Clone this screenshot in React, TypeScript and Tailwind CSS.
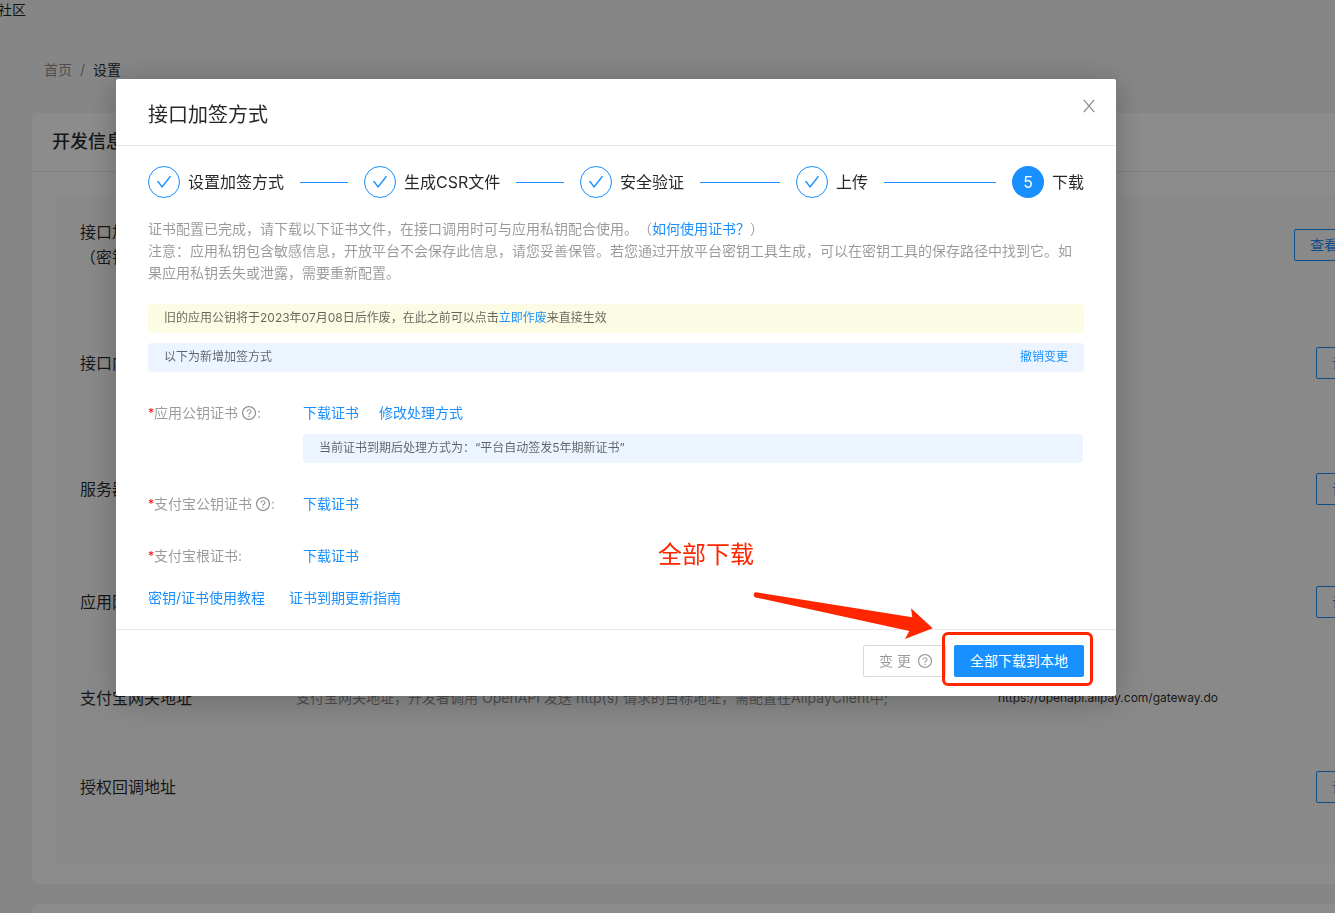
import type { ReactNode } from 'react';
import { AiOutlineCheck, AiOutlineQuestionCircle } from 'react-icons/ai';

interface SettingRow {
  label: ReactNode;
  height: string;
  desc?: string;
  value?: string;
  action?: string;
  actionWidth?: string;
}

const rows: SettingRow[] = [
  {
    label: (
      <>
        接口加签方式
        <br />
        （密钥/证书）
      </>
    ),
    height: 'min-h-[98px]',
    action: '查看修改',
    actionWidth: 'w-[86px]',
  },
  { label: '接口内容加密方式', height: 'min-h-[138px]', action: '设 置', actionWidth: 'w-16' },
  { label: '服务器IP白名单', height: 'min-h-[114px]', action: '设 置', actionWidth: 'w-16' },
  { label: '应用网关', height: 'min-h-[112px]', action: '设 置', actionWidth: 'w-16' },
  {
    label: '支付宝网关地址',
    height: 'min-h-[80px]',
    desc: '支付宝网关地址，开发者调用 OpenAPI 发送 http(s) 请求的目标地址，需配置在AlipayClient中;',
    value: 'https://openapi.alipay.com/gateway.do',
  },
  { label: '授权回调地址', height: 'min-h-[98px]', action: '设 置', actionWidth: 'w-16' },
];

const steps = ['设置加签方式', '生成CSR文件', '安全验证', '上传', '下载'];

const Link = ({ children }: { children: ReactNode }) => (
  <a href="#" className="text-[#1890ff]">
    {children}
  </a>
);

const Steps = ({ current }: { current: number }) => (
  <ol className="flex items-center">
    {steps.map((step, index) => (
      <li key={step} className={`flex items-center text-base text-black/85 ${index < steps.length - 1 ? 'flex-1' : ''}`}>
        {index < current ? (
          <span className="mr-2 flex h-8 w-8 items-center justify-center rounded-full border border-[#1890ff] text-[#1890ff]">
            <AiOutlineCheck className="h-[18px] w-[18px]" />
          </span>
        ) : (
          <span className="mr-2 flex h-8 w-8 items-center justify-center rounded-full bg-[#1890ff] text-white">
            {index + 1}
          </span>
        )}
        <span className="whitespace-nowrap">{step}</span>
        {index < steps.length - 1 && <span className="mx-4 h-px flex-1 bg-[#1890ff]" />}
      </li>
    ))}
  </ol>
);

interface CertRowProps {
  label: string;
  help?: boolean;
  children: ReactNode;
}

const CertRow = ({ label, help, children }: CertRowProps) => (
  <div className="mt-[30px] flex items-start">
    <div className="flex w-[155px] shrink-0 items-center text-black/40">
      <span className="text-xs text-[#ff0000]">*</span>
      {label}
      {help && <AiOutlineQuestionCircle className="ml-[3px] h-4 w-4 text-black/45" />}:
    </div>
    <div className="mr-px flex-1">{children}</div>
  </div>
);

const SettingsPage = () => (
  <div className="-mr-[93px]">
    <div className="-ml-0.5 h-5 leading-5 text-black/85">社区</div>
    <nav className="mt-[39px] ml-11 flex gap-2 leading-[22px]">
      <a href="#" className="text-black/45">首页</a>
      <span className="text-black/45">/</span>
      <span className="text-black/85">设置</span>
    </nav>
    <section className="mt-8 ml-8 rounded-lg bg-white pb-5">
      <h2 className="border-b border-[#e8e8e8] px-5 py-[15px] text-lg leading-7 font-medium text-black/85">开发信息</h2>
      <div className="mx-6 mt-6 bg-[#fafafa] px-6 pb-7">
        {rows.map((row, index) => (
          <div key={index} className={`flex items-center ${row.height}`}>
            <div className="w-[216px] shrink-0 text-base leading-[25px] text-black/85">{row.label}</div>
            <div className="w-[702px] shrink-0 text-black/45">{row.desc}</div>
            <div className="flex-1 text-xs text-black/85">{row.value}</div>
            {row.action && (
              <button
                className={`h-8 shrink-0 rounded-xs border border-[#1890ff] px-[15px] text-left whitespace-nowrap text-[#1890ff] ${row.actionWidth}`}
              >
                {row.action}
              </button>
            )}
          </div>
        ))}
      </div>
    </section>
    <section className="mt-5 ml-8 h-20 rounded-lg bg-white" />
  </div>
);

export default function App() {
  return (
    <div
      lang="zh-CN"
      className="h-screen overflow-hidden bg-[#f4f4f4] font-['Inter','Noto_Sans_CJK_SC',sans-serif] text-sm leading-[22px] [text-spacing-trim:space-all]"
    >
      <SettingsPage />

      <div className="fixed inset-0 overflow-hidden bg-black/45 pt-[79px] pl-[116px]">
        <div
          role="dialog"
          aria-labelledby="dialog-title"
          className="relative w-full max-w-[1000px] rounded-xs bg-white shadow-[0_4px_32px_rgba(0,0,0,0.25)]"
        >
          {/* Header */}
          <div className="flex items-start justify-between border-b border-[#e8e8e8] px-8 pt-5 pb-[14px]">
            <h1 id="dialog-title" className="text-xl leading-8 text-black/85">接口加签方式</h1>
            <button aria-label="关闭" className="-mr-[13px] flex h-4 w-4 items-center text-black/45">
              <svg viewBox="0 0 16 16" className="h-4 w-4" fill="none" stroke="currentColor" strokeWidth="1.3">
                <path d="M2.8 .8 13.2 13.2M13.2 .8 2.8 13.2" />
              </svg>
            </button>
          </div>

          {/* Body */}
          <div className="px-8 py-5">
            <Steps current={4} />

            <p className="mt-5 text-black/40">
              证书配置已完成，请下载以下证书文件，在接口调用时可与应用私钥配合使用。（<Link>如何使用证书？</Link>）
              <br />
              注意：应用私钥包含敏感信息，开放平台不会保存此信息，请您妥善保管。若您通过开放平台密钥工具生成，可以在密钥工具的保存路径中找到它。如果应用私钥丢失或泄露，需要重新配置。
            </p>

            <div className="mt-5 h-[29px] rounded bg-[#fcfbe3] px-4 text-xs leading-7 text-black/60">
              旧的应用公钥将于2023年07月08日后作废，在此之前可以点击<Link>立即作废</Link>来直接生效
            </div>
            <div className="mt-[10px] flex h-[29px] justify-between rounded bg-[#ecf5ff] px-4 text-xs leading-7 text-black/60">
              <span>以下为新增加签方式</span>
              <Link>撤销变更</Link>
            </div>

            <CertRow label="应用公钥证书" help>
              <div className="flex gap-5">
                <Link>下载证书</Link>
                <Link>修改处理方式</Link>
              </div>
              <div className="mt-[10px] h-[29px] rounded bg-[#ecf5ff] px-4 text-xs leading-7 text-black/60">
                当前证书到期后处理方式为：“平台自动签发5年期新证书”
              </div>
            </CertRow>
            <CertRow label="支付宝公钥证书" help>
              <Link>下载证书</Link>
            </CertRow>
            <CertRow label="支付宝根证书">
              <Link>下载证书</Link>
            </CertRow>

            <div className="mt-5 flex gap-6">
              <Link>密钥/证书使用教程</Link>
              <Link>证书到期更新指南</Link>
            </div>
          </div>

          {/* Footer */}
          <div className="flex justify-end gap-2 border-t border-[#e8e8e8] px-8 pt-[15px] pb-[19px]">
            <button className="flex h-8 items-center gap-1.5 rounded-xs border border-[#d9d9d9] pr-3 pl-[15px] text-black/40">
              变 更
              <AiOutlineQuestionCircle className="h-4 w-4" />
            </button>
            <div className="relative">
              <button className="h-8 rounded-xs bg-[#1890ff] px-4 text-white">全部下载到本地</button>
              <span className="pointer-events-none absolute -top-[13px] -right-[9px] -bottom-[9px] -left-3 rounded-md border-3 border-[#ff2600]" />
            </div>
          </div>

          {/* Annotation */}
          <span className="absolute top-[460px] left-[542px] text-2xl text-[#ff2600]">全部下载</span>
          <svg className="absolute top-[511px] left-[636px] h-[50px] w-[184px]" viewBox="0 0 184 50" fill="#ff2600">
            <path d="M4 2.3 160.3 27.3 159 18.3 180.7 38.3 153 49 157.3 41 3.5 7.4Q1.5 6.8 1.7 4.6 2 2 4 2.3Z" />
          </svg>
        </div>
      </div>
    </div>
  );
}
